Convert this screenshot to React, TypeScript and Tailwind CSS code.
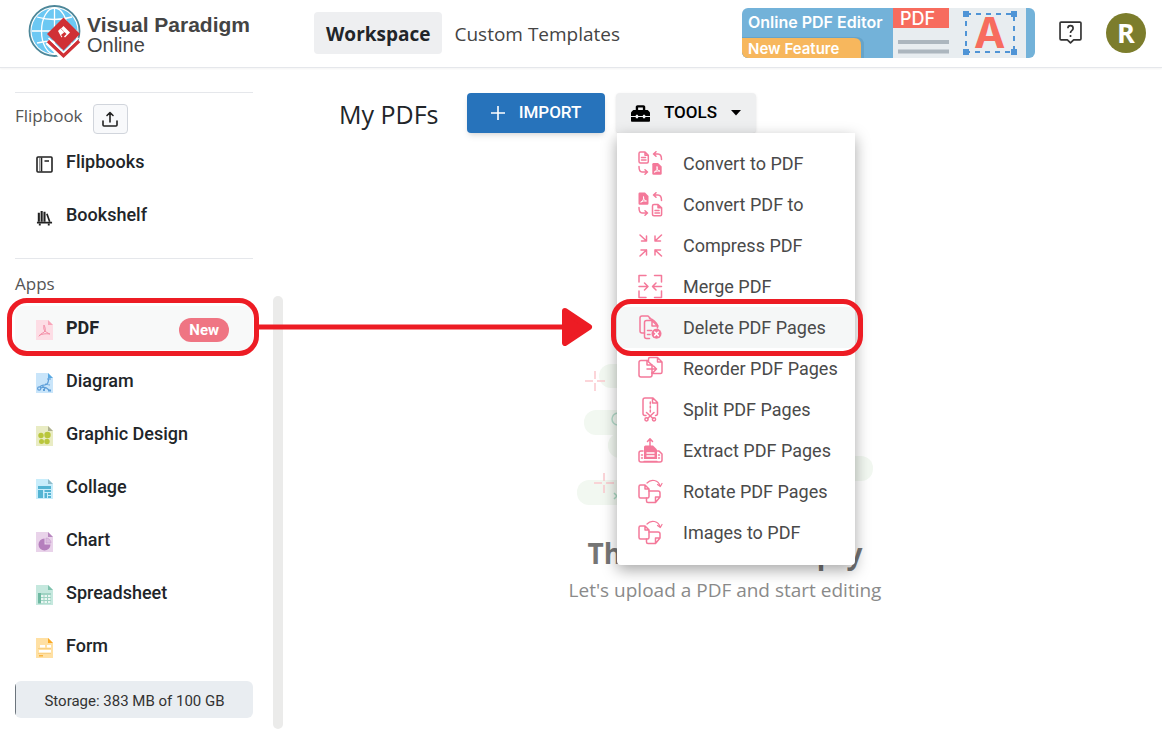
import type { ReactNode } from "react";
import { FaToolbox } from "react-icons/fa";

interface AppItem {
    name: string;
    page: string;
    fold: string;
    art: ReactNode;
}

interface ToolItem {
    label: string;
    icon: ReactNode;
}

const apps: AppItem[] = [
    {
        name: "PDF",
        page: "#fddde5",
        fold: "#f8a5b9",
        art: (
            <path
                d="M3 16c2-3 5-3 6-5 1-2-1-6-1-6s-1 4 1 6 5 3 5 3-6-1-10 1"
                fill="none"
                stroke="#f48ba5"
                strokeWidth="1"
                strokeLinecap="round"
            />
        ),
    },
    {
        name: "Diagram",
        page: "#c9e5fa",
        fold: "#5aa9e2",
        art: (
            <g fill="none" stroke="#5f9fd9" strokeWidth="1.2">
                <circle cx="3.2" cy="15.5" r="1.6" />
                <path d="M4 14c1-3 5-1 7-3s1-4 2-6M5 15c3-2 5-1 8 2M6 12l3 4M9 11l5 1M11 6h4" />
                <path d="M7 17h2M12 17.500h3" strokeWidth="2" />
            </g>
        ),
    },
    {
        name: "Graphic Design",
        page: "#e9ecc4",
        fold: "#aeb08f",
        art: (
            <g fill="#b9c63c">
                <circle cx="5" cy="9.500" r="2.700" />
                <circle cx="11.500" cy="9" r="3.200" />
                <circle cx="5.500" cy="15.500" r="2.500" />
                <circle cx="11" cy="15.500" r="2.700" />
            </g>
        ),
    },
    {
        name: "Collage",
        page: "#c8edfb",
        fold: "#8fbccb",
        art: (
            <path
                fill="#53b4d3"
                d="M2 7h13v3H2zM2 11h5v8H2zM8.500 11H15v2H8.500zM8.500 14h2.500v5H8.500zM12 14h3v2h-3zM12 17h3v2h-3z"
            />
        ),
    },
    {
        name: "Chart",
        page: "#e9d3ea",
        fold: "#b888bf",
        art: (
            <>
                <path d="M8.500 6.500a6 6 0 1 0 6 6h-6z" fill="#b57fbd" />
                <path d="M10 11V6a5 5 0 0 1 5 5z" fill="#dcbde0" stroke="#c79acd" strokeWidth=".6" />
            </>
        ),
    },
    {
        name: "Spreadsheet",
        page: "#c5e8de",
        fold: "#7fc2ad",
        art: (
            <>
                <path d="M2 8h3v10.500H2z" fill="#6fb9a2" />
                <path d="M5 8h10v10.500H5z" fill="#9fd3c3" />
                <path
                    fill="#eaf7f3"
                    d="M5 10h2.500v2H5zM8.500 10H11v2H8.500zM12 10h2.500v2H12zM5 13h2.500v2H5zM8.500 13H11v2H8.500zM12 13h2.500v2H12zM5 16h2.500v2H5zM8.500 16H11v2H8.500zM12 16h2.500v2H12z"
                />
            </>
        ),
    },
    {
        name: "Form",
        page: "#ffe0a3",
        fold: "#f9a825",
        art: (
            <>
                <path fill="#fff" d="M4 7h5v2.500H4zM11 7h4v2.500h-4zM3 12h12v2.500H3z" />
                <path d="M2 10.500h13M2 15.500h13" stroke="#f7c873" strokeWidth=".7" />
                <path d="M3 17h4v1.500H3z" fill="#f9b43f" />
            </>
        ),
    },
];

const convertArrows = (
    <path d="M15.500 3H20q3.500 0 3.500 5.500M18 .700 15.500 3 18 5.300M1 15.500Q1 21 4 21h5.500M7 18.700 9.500 21 7 23.300" />
);

const rotatedPages = (
    <>
        <path d="M7 6H2.500Q1 6 1 7.500v10Q1 19 2.500 19h7q1.500 0 1.500-1.500V10zM7 6v4h4" />
        <path d="M11 12h9q2 0 2 2v4l-4.500 5.500H10q-1.500 0-1.500-1.500v-3M17.500 23.500V18H22" />
        <path d="M9 4q3-3.500 7.500-2.500 4.500 1 5.500 5.500M19.500 5.500 22.300 7.500 24 4.500" strokeWidth="1.2" />
    </>
);

const tools: ToolItem[] = [
    {
        label: "Convert to PDF",
        icon: (
            <>
                <path d="M7 1H2.500Q1 1 1 2.500v8Q1 12 2.500 12H9q1.300 0 1.300-1.500V4.300zM7 1v3.300h3.300M3.500 6.500h4M3.500 9h4.500" />
                {convertArrows}
                <path d="M15.500 12H20l3.700 3.500v7q0 1.200-1.200 1.200h-7q-1.200 0-1.200-1.200v-9.300Q14.300 12 15.500 12z" fill="currentColor" stroke="none" />
                <path d="M16.500 21c2-1 3-3 2.500-5.500 0 3 1 4.500 3 4.500q-3-.5-5.500 1" stroke="#fff" strokeWidth=".9" />
            </>
        ),
    },
    {
        label: "Convert PDF to",
        icon: (
            <>
                <path d="M1.500 .500H7l3.500 3.500v7.500q0 1.200-1.200 1.200H1.700Q.500 12.700 .500 11.500v-9.700Q.500 .500 1.700 .500z" fill="currentColor" stroke="none" />
                <path d="M3 10c2-1 3-3 2.500-5.500 0 3 1 4.500 3 4.500Q5.500 8.500 3 10" stroke="#fff" strokeWidth=".9" />
                {convertArrows}
                <path d="M20 12.500h-4q-1.500 0-1.500 1.500v8.500q0 1.200 1.500 1.200h6.300q1.300 0 1.300-1.200v-6.700zM20 12.500v3.300h3.500M17 18.500h4M17 21h4.500" />
            </>
        ),
    },
    {
        label: "Compress PDF",
        icon: (
            <path d="M2 2l6.500 6M8.500 3v5h-5M23.500 2 17 8M17 3v5h5.500M2 23l6.500-6M3 17h5.500v5M23.500 23 17 17M22.500 17H17v5" />
        ),
    },
    {
        label: "Merge PDF",
        icon: (
            <path d="M1 8V1.500h7M16.500 1.500h7V8M1 17v6.500h7M16.500 23.500h7V17M1 12.500h8.500M6.500 9l3.500 3.500L6.500 16M23.500 12.500H15M18 9l-3.500 3.500L18 16" />
        ),
    },
    {
        label: "Delete PDF Pages",
        icon: (
            <>
                <path d="M6.500 18H4Q2 18 2 16V3q0-2 2-2h6l2.500 2.500" />
                <path d="M11.500 23.500H8.500q-2 0-2-2V7.500q0-2 2-2H14l5.500 5.500v2M14 5.500V11h5.500M9.500 15.500h4M9.500 19.500h2.500" />
                <path d="M11.500 3.500Q17 5 20 11" />
                <circle cx="18.500" cy="18.800" r="5" fill="currentColor" stroke="none" />
                <path d="m16.700 17 3.600 3.600m0-3.600-3.600 3.600" stroke="#fff" />
            </>
        ),
    },
    {
        label: "Reorder PDF Pages",
        icon: (
            <>
                <path d="M9 4.500H3q-2 0-2 2V19q0 2 2 2h9q2 0 2-2v-2.500M9 4.500V9h5" />
                <path d="M10.500 6V3q0-1.500 1.500-1.500h7.500l4.500 4.500v10q0 1.500-1.500 1.500H14V9L9 4.500M19.500 1.500V6H24M9 13h9.500M15.500 10l3 3-3 3" />
            </>
        ),
    },
    {
        label: "Split PDF Pages",
        icon: (
            <>
                <path d="M8 18.500H7q-2 0-2-2V3q0-2 2-2h8l4.500 4.500v11q0 2-2 2M14.500 1v5h5" />
                <path d="M12.300 5v12" strokeDasharray="2 2" />
                <path d="m8.500 15.500 6.500 6m1-6-6.500 6" />
                <circle cx="8.500" cy="22.300" r="1.600" />
                <circle cx="16" cy="22.300" r="1.600" />
            </>
        ),
    },
    {
        label: "Extract PDF Pages",
        icon: (
            <>
                <path d="M12 8V1M9.500 3.500 12 .800l2.500 2.700" />
                <path d="M7.500 7.500H15l4 4V21H6V9q0-1.500 1.500-1.500z" fill="currentColor" stroke="none" />
                <path d="M9 15h7M9 18h7" stroke="#fff" />
                <path d="M5 13H3q-2 0-2 2v7q0 2 2 2h19q2 0 2-2v-6l-3-3h-1.500M3.500 17h1M3.500 20h1M20.500 17h1M20.500 20h1M6 23.500h13" />
            </>
        ),
    },
    { label: "Rotate PDF Pages", icon: rotatedPages },
    { label: "Images to PDF", icon: rotatedPages },
];

function LogoMark() {
    return (
        <svg className="w-[53px] h-[54px]" viewBox="0 0 53 54" aria-hidden="true">
            <circle cx="26.500" cy="26" r="25" fill="#fff" stroke="#4d8799" strokeWidth="1.800" />
            <circle cx="26.500" cy="26" r="23" fill="#6cc8f3" />
            <g fill="none" stroke="#fff" strokeWidth="1.300">
                <path d="M26.500 3v46M4 26h45M9 12q17 5 35 0M9 38q17-4 35 0" />
                <ellipse cx="26.500" cy="26" rx="13" ry="23" />
            </g>
            <path d="m20 36.500 15.500 15.500L51 36.500" fill="none" stroke="#fff" strokeWidth="7" />
            <path d="M35.500 12.500 52 29 35.500 45.500 19 29z" fill="#d03035" />
            <path d="m20 36 15.500 14.500L51 36" fill="none" stroke="#d03035" strokeWidth="3.500" />
            <path d="m20.500 33 15 14.500 15-14.500" fill="none" stroke="#fff" strokeWidth="1.500" />
            <path d="m35.500 21 6.500 6.500-5 5-3.500-3.500 2.500-2.500-3-3-2.500 2.500z" fill="#fff" />
            <path d="m30 26 2.500-2.500 5 5-4 4z" fill="#fff" />
            <path d="m33 30 3.500-3 2 2-3.500 3.500z" fill="#d03035" />
        </svg>
    );
}

function Banner() {
    return (
        <a href="#pdf-editor" className="block overflow-hidden rounded-md" aria-label="Online PDF Editor">
            <svg className="w-[293px] h-[50px]" viewBox="0 0 293 50">
                <path d="M0 0h293v50H0z" fill="#73b2d9" />
                <path d="M0 29h114q8 0 8 8v13H0z" fill="#66a4ca" />
                <path d="M0 30h112q7 0 7 7v13H0z" fill="#f7b75d" />
                <path d="M151 0h133v50H151z" fill="#e8edf0" />
                <path d="M151 0h56v20h-56z" fill="#f76c5e" />
                <path d="M156 34h51M156 43.500h51" stroke="#acb6be" strokeWidth="4" />
                <path d="M224 6h48v38h-48z" fill="none" stroke="#4f94d6" strokeWidth="2" strokeDasharray="5 5" />
                <path d="M221 3h6v6h-6zM269 3h6v6h-6zM221 41h6v6h-6zM269 41h6v6h-6z" fill="#4f94d6" />
                <g fontFamily="Inter, sans-serif" fontWeight="600" fill="#fff">
                    <text x="6" y="20" fontSize="16">Online PDF Editor</text>
                    <text x="6" y="46" fontSize="15">New Feature</text>
                    <text x="158" y="17" fontSize="18" fontWeight="500">PDF</text>
                    <text x="232" y="40" fontSize="42" fontWeight="700" fill="#f76c5e">A</text>
                </g>
            </svg>
        </a>
    );
}

function Header() {
    return (
        <header className="flex items-center h-[68px] pl-7 pr-4 border-b border-gray-200 shadow-xs">
            <a href="#home" className="flex items-center w-[286px] pb-1">
                <LogoMark />
                <div className="pl-1.5 pt-1.5 font-['Liberation_Sans',sans-serif] text-[#444] leading-5">
                    <div className="text-[21px] font-bold whitespace-nowrap">Visual Paradigm</div>
                    <div className="text-xl leading-5">Online</div>
                </div>
            </a>
            <nav className="flex items-center pb-0.5 text-[19px] text-[#212529] whitespace-nowrap">
                <a href="#workspace" className="flex items-center h-[42px] px-3 pt-1 rounded bg-[#eeeff1] font-bold">
                    Workspace
                </a>
                <a href="#templates" className="px-3 pt-1 text-[#444]">
                    Custom Templates
                </a>
            </nav>
            <div className="flex items-center gap-6 ml-auto pb-0.5">
                <Banner />
                <button aria-label="Help">
                    <svg className="size-[23px]" viewBox="1 1 22 22" fill="none" stroke="#333" strokeWidth="1.600" strokeLinejoin="round">
                        <path d="M3 2h18q1 0 1 1v15q0 1-1 1h-6l-3 3-3-3H3q-1 0-1-1V3q0-1 1-1z" />
                        <path d="M9.500 8q0-2.500 2.500-2.500T14.500 8q0 1.300-1.300 2.200Q12 11 12 12.500M12 14.500v1.800" />
                    </svg>
                </button>
                <button className="size-10 rounded-full bg-[#7c7d2c] text-white text-[27px] leading-10 font-bold">R</button>
            </div>
        </header>
    );
}

function SidebarLink({ label, icon, active }: { label: string; icon: ReactNode; active?: boolean }) {
    return (
        <a
            href={`#${label}`}
            className={`flex items-center h-11 pl-[21px] pr-6 rounded-lg font-['Roboto',sans-serif] text-lg text-[#212529] ${
                active ? "bg-[#f8f9f9] font-bold" : "font-medium"
            }`}
        >
            <span className="flex items-center w-[30px] pt-1">{icon}</span>
            {label}
            {active && (
                <span className="ml-auto mt-1 px-2.5 rounded-full bg-[#ef7583] text-white text-[15px] leading-6 font-bold">
                    New
                </span>
            )}
        </a>
    );
}

function Arrow() {
    return (
        <svg className="w-[336px] h-10" viewBox="0 0 336 40" aria-hidden="true">
            <path d="M0 21h310" stroke="#ed1c24" strokeWidth="5" />
            <path d="M308 5 332 21 308 37z" fill="#ed1c24" stroke="#ed1c24" strokeWidth="6" strokeLinejoin="round" />
        </svg>
    );
}

function Sidebar() {
    return (
        <aside className="w-[285px] shrink-0 pl-[15px] pt-6">
            <div className="w-[238px] border-t border-gray-200">
                <div className="flex items-start gap-2.5 pt-[11px] pb-1.5 text-[17px] leading-6 text-[#555]">
                    Flipbook
                    <button aria-label="Upload flipbook" className="flex items-center justify-center w-[35px] h-[30px] rounded border border-gray-300 bg-[#f8f9fb]">
                        <svg className="size-4" viewBox="0 0 16 16" fill="none" stroke="#222" strokeWidth="1.600" strokeLinecap="round" strokeLinejoin="round">
                            <path d="M1 10v4q0 1 1 1h12q1 0 1-1v-4M8 11V1.500M5 4.500l3-3 3 3" />
                        </svg>
                    </button>
                </div>
                <div className="flex flex-col gap-[9px]">
                    <SidebarLink
                        label="Flipbooks"
                        icon={
                            <svg className="size-[17px]" viewBox="0 0 17 17" fill="none" stroke="#222" strokeWidth="1.600">
                                <rect x="1" y="1" width="15" height="15" rx="1" />
                                <path d="M5.500 1.500v14M8.500 5h4.500" />
                                <path d="M3.500 2v13" strokeWidth="1" stroke="#999" />
                            </svg>
                        }
                    />
                    <SidebarLink
                        label="Bookshelf"
                        icon={
                            <svg className="size-[17px]" viewBox="0 0 18 18" fill="none" stroke="#222">
                                <path d="M3 4v9.500M6 2v11.500M9 3v10.500" strokeWidth="2.200" />
                                <path d="m11.500 5 3 8.500" strokeWidth="1.800" />
                                <path d="M1 14.500h16M3 16.500h2M12.500 16.500h2" strokeWidth="1.800" />
                            </svg>
                        }
                    />
                </div>
            </div>
            <div className="w-[238px] mt-[21px] pt-[13px] border-t border-gray-200 text-[17px] leading-6 text-[#555]">Apps</div>
            <div className="flex justify-between pr-0.5">
                <div className="flex flex-col w-[238px] pt-2.5 gap-[9px]">
                    {apps.map((app) => (
                        <div key={app.name} className="relative">
                            <SidebarLink
                                label={app.name}
                                active={app.name === "PDF"}
                                icon={
                                    <svg className="w-[17px] h-5" viewBox="0 0 17 20">
                                        <path d="M0 0h12l5 5v15H0z" fill={app.page} />
                                        <path d="M12 0v5h5z" fill={app.fold} />
                                        {app.art}
                                    </svg>
                                }
                            />
                            {app.name === "PDF" && (
                                <>
                                    <div className="absolute -left-2 -right-1.5 -top-2 -bottom-1.5 z-20 border-[5px] border-[#ed1c24] rounded-[20px] pointer-events-none" />
                                    <div className="absolute left-full top-0 z-20 pl-1 pointer-events-none">
                                        <Arrow />
                                    </div>
                                </>
                            )}
                        </div>
                    ))}
                    <div className="flex mt-1 h-[37px] overflow-hidden rounded-md bg-[#e9edf1] font-['Roboto',sans-serif] text-[15px] leading-10 text-[#333]">
                        <div className="w-px bg-[#6c757d]" />
                        <div className="flex-1 text-center">Storage: 383 MB of 100 GB</div>
                    </div>
                </div>
                <div className="w-2.5 rounded-full bg-[#ebebea] mb-[-11px]" />
            </div>
        </aside>
    );
}

function ToolsMenu() {
    return (
        <div className="absolute top-full left-px z-10 w-[238px] pt-2.5 pb-3 rounded-b bg-white shadow-[0_5px_15px_rgba(0,0,0,0.35)]">
            {tools.map((tool) => {
                const selected = tool.label === "Delete PDF Pages";
                return (
                    <div key={tool.label} className="relative">
                        <button
                            className={`flex items-center w-full h-[41px] pl-[21px] gap-[19px] text-lg text-[#4a4a4a] whitespace-nowrap ${
                                selected ? "bg-[#f5f7f7]" : ""
                            }`}
                        >
                            <svg
                                className="size-[26px] shrink-0 text-[#f4799a]"
                                viewBox="0 0 26 26"
                                fill="none"
                                stroke="currentColor"
                                strokeWidth="1.500"
                                strokeLinecap="round"
                                strokeLinejoin="round"
                            >
                                {tool.icon}
                            </svg>
                            {tool.label}
                        </button>
                        {selected && (
                            <div className="absolute -left-1.5 -right-2 -inset-y-2 border-[5px] border-[#ed1c24] rounded-[20px] pointer-events-none" />
                        )}
                    </div>
                );
            })}
        </div>
    );
}

function EmptyState() {
    return (
        <div className="flex flex-col items-center mt-[231px] pl-[3px] text-center whitespace-nowrap">
            <svg className="w-[296px] h-[141px]" viewBox="0 0 296 141" aria-hidden="true">
                <g fill="#f2f8f1">
                    <rect x="22" y="0" width="200" height="24" rx="12" />
                    <rect x="7" y="46" width="230" height="25" rx="12" />
                    <rect x="31" y="69" width="200" height="25" rx="12" />
                    <rect x="100" y="92" width="196" height="25" rx="12" />
                    <rect x="0" y="116" width="220" height="25" rx="12" />
                </g>
                <path d="M18 7v8m0 4v8M8 17h8m4 0h8M27 109v8m0 4v8M17 119h8m4 0h8" stroke="#fbc7cd" strokeWidth="1.500" />
                <circle cx="41" cy="55" r="6" fill="none" stroke="#b5dccb" strokeWidth="1.500" />
                <path d="m37 129 6 6m0-6-6 6" stroke="#a9d9c3" strokeWidth="1.500" />
            </svg>
            <h2 className="mt-6 text-[28px] leading-[48px] font-bold text-[#757575]">This folder is empty</h2>
            <p className="text-[19px] leading-[26px] text-[#8a8a8a]">Let's upload a PDF and start editing</p>
        </div>
    );
}

export default function App() {
    return (
        <div className="min-h-screen bg-white overflow-hidden font-['Open_Sans',sans-serif]">
            <Header />
            <div className="flex">
                <Sidebar />
                <main className="flex-1 pt-[25px]">
                    <div className="flex items-center pl-[54px] font-['Roboto',sans-serif]">
                        <h1 className="w-32 pt-0.5 font-['Open_Sans',sans-serif] text-[25px] leading-9 text-[#212529] whitespace-nowrap">My PDFs</h1>
                        <button className="flex items-center justify-center gap-3.5 w-[138px] h-10 rounded bg-[#2773bb] text-white text-[17px] font-medium shadow-md">
                            <svg className="size-3.5" viewBox="0 0 14 14" stroke="currentColor" strokeWidth="1.600">
                                <path d="M7 0v14M0 7h14" />
                            </svg>
                            IMPORT
                        </button>
                        <div className="relative ml-[11px]">
                            <button className="flex items-center justify-between w-[140px] h-10 px-[15px] rounded bg-[#eeeff0] text-black text-[17px] font-medium shadow-sm">
                                <FaToolbox className="size-[19px]" />
                                TOOLS
                                <svg className="w-2.5 h-1.5" viewBox="0 0 10 6">
                                    <path d="M0 0h10L5 5.500z" />
                                </svg>
                            </button>
                            <ToolsMenu />
                        </div>
                    </div>
                    <EmptyState />
                </main>
            </div>
        </div>
    );
}
